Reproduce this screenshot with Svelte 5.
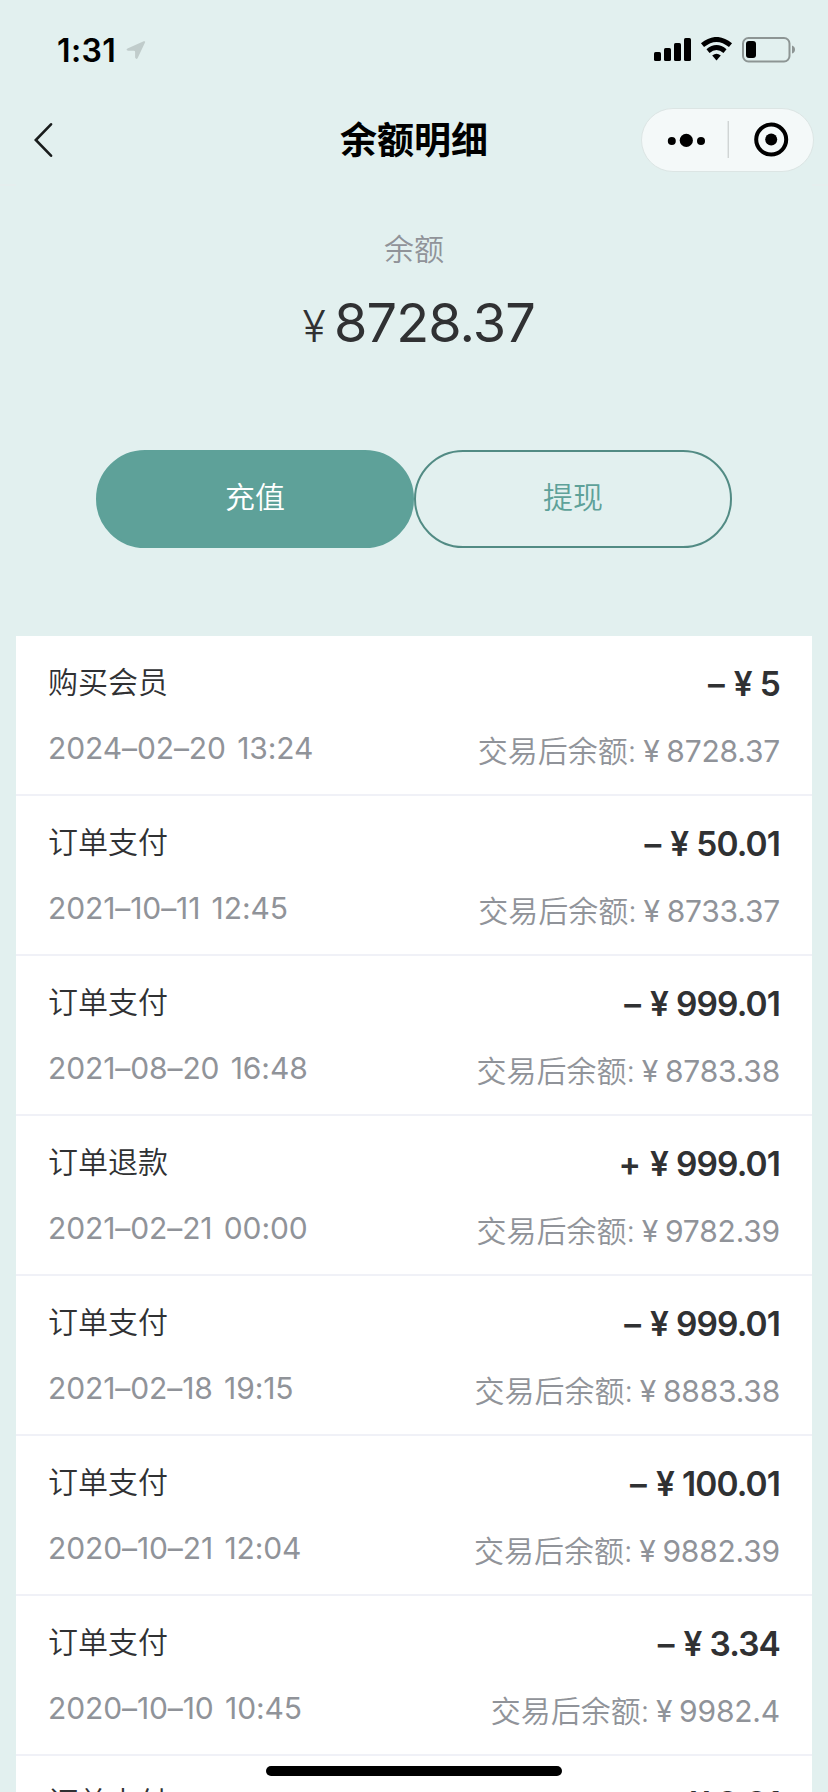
<script lang="ts">
    type Entry = {
        title: string;
        time: string;
        sign: string;
        amount: string;
        balance: string;
    };

    const balance = '8728.37';

    const entries: Entry[] = [
        { title: '购买会员', time: '2024–02–20 13:24', sign: '–', amount: '5', balance: '8728.37' },
        { title: '订单支付', time: '2021–10–11 12:45', sign: '–', amount: '50.01', balance: '8733.37' },
        { title: '订单支付', time: '2021–08–20 16:48', sign: '–', amount: '999.01', balance: '8783.38' },
        { title: '订单退款', time: '2021–02–21 00:00', sign: '+', amount: '999.01', balance: '9782.39' },
        { title: '订单支付', time: '2021–02–18 19:15', sign: '–', amount: '999.01', balance: '8883.38' },
        { title: '订单支付', time: '2020–10–21 12:04', sign: '–', amount: '100.01', balance: '9882.39' },
        { title: '订单支付', time: '2020–10–10 10:45', sign: '–', amount: '3.34', balance: '9982.4' },
        { title: '订单支付', time: '', sign: '–', amount: '0.01', balance: '' }
    ];
</script>

<div class="page">
    <header>
        <div class="status">
            <span class="clock">1:31</span>
            <svg class="location" width="20" height="20" viewBox="0 0 20 20" aria-hidden="true">
                <path d="M1.5 8.6 17.7 1.3Q19.6.7 19 2.5L11.7 18Q10.3 20.2 9.1 17.5V12Q9.1 10.8 7.8 10.8H2.2Q-.8 10.2 1.5 8.6Z" />
            </svg>
            <svg class="indicators" width="142" height="26" viewBox="0 0 142 26" aria-hidden="true">
                <rect x="0" y="15" width="7" height="9" rx="1.6" />
                <rect x="10" y="11" width="7" height="13" rx="1.6" />
                <rect x="20" y="6" width="7" height="18" rx="1.6" />
                <rect x="30" y="1" width="7" height="23" rx="1.6" />
                <g class="waves">
                    <path d="M48.5 8.2Q62.5-3.4 76.5 8.2" />
                    <path d="M54 14.1Q62.5 7.1 71 14.1" />
                </g>
                <path d="M58.2 18.6Q62.5 15 66.8 18.6L62.5 23.6Z" />
                <rect class="battery" x="89" y="1" width="46.5" height="23.5" rx="5.5" />
                <rect x="92" y="4" width="10" height="17" rx="3" />
                <path class="cap" d="M138 8.5Q141 9.5 141 12.5T138 16.5Z" />
            </svg>
        </div>
        <div class="nav">
            <svg class="back" width="20" height="36" viewBox="0 0 20 36" aria-hidden="true">
                <path d="M17 2.3 1.8 18 17 33.7" />
            </svg>
            <h1>余额明细</h1>
            <div class="capsule">
                <svg width="173" height="64" viewBox="0 0 173 64" aria-hidden="true">
                    <rect class="shell" x=".5" y=".5" width="172" height="63" rx="31.5" />
                    <circle cx="30.8" cy="33" r="4" />
                    <circle cx="45.3" cy="32.4" r="6.6" />
                    <circle cx="60" cy="33" r="4" />
                    <path class="divider" d="M87.2 13V50" />
                    <circle class="ring" cx="130.2" cy="31.6" r="15" />
                    <circle cx="130.2" cy="31.6" r="6" />
                </svg>
            </div>
        </div>
    </header>

    <main>
        <section class="summary">
            <div class="label">余额</div>
            <div class="total"><span class="yen">¥</span>{balance}</div>
            <div class="actions">
                <button class="recharge">充值</button>
                <button class="withdraw">提现</button>
            </div>
        </section>

        <ul class="entries">
            {#each entries as entry}
                <li>
                    <div class="line">
                        <span class="title">{entry.title}</span>
                        <span class="amount">
                            <span class="sign">{entry.sign}</span><span class="yen">¥</span>{entry.amount}
                        </span>
                    </div>
                    {#if entry.time}
                        <div class="line detail">
                            <span class="time">{entry.time}</span>
                            <span class="after">
                                交易后余额:<span class="figure"><span class="yen">¥</span>{entry.balance}</span>
                            </span>
                        </div>
                    {/if}
                </li>
            {/each}
        </ul>
    </main>

    <div class="home-bar"></div>
</div>

<style>
    :global(body) {
        background: #e2f0ef;
    }

    .page {
        position: relative;
        height: 1792px;
        overflow: hidden;
        background: #e2f0ef;
        color: #303133;
        font-family: Inter, 'Noto Sans CJK SC', sans-serif;
        font-size: 30px;
        font-weight: 350;
    }

    header {
        box-sizing: border-box;
        height: 186px;
        border-bottom: 2px solid #e5eeee;
    }

    .status {
        display: flex;
        height: 96px;
        padding: 0 32px 0 57px;
        box-sizing: border-box;
    }

    .clock {
        margin-top: 32px;
        width: 69px;
        color: #000;
        font-size: 32px;
        font-weight: 600;
        line-height: 38px;
        letter-spacing: 0.4px;
    }

    .location {
        margin-top: 40px;
        fill: #c0cccb;
    }

    .indicators {
        margin: 37px 0 0 auto;
    }

    .waves {
        fill: none;
        stroke: #000;
        stroke-width: 4.8;
    }

    .battery {
        fill: none;
        stroke: #8d9594;
        stroke-width: 2;
    }

    .cap {
        fill: #8d9594;
    }

    .nav {
        display: grid;
        grid-template-columns: 1fr auto 1fr;
        align-items: center;
        height: 88px;
        padding: 0 14px;
    }

    .back {
        margin-left: 20px;
        fill: none;
        stroke: #191c1c;
        stroke-width: 2.6;
        stroke-linecap: round;
    }

    h1 {
        margin: 2px 0 0;
        color: #000;
        font-size: 37px;
        font-weight: 600;
        line-height: 54px;
    }

    .capsule {
        justify-self: end;
        height: 64px;
    }

    .capsule svg {
        display: block;
    }

    .shell {
        fill: #f4f9f9;
        stroke: #dce5e4;
    }

    .divider {
        stroke: #c0c6c5;
    }

    .ring {
        fill: none;
        stroke: #000;
        stroke-width: 4;
    }

    main {
        padding: 0 16px;
    }

    /* covers the header rule between the side gutters */
    .summary {
        height: 452px;
        margin-top: -2px;
        box-sizing: border-box;
        padding-top: 43px;
        background: #e2f0ef;
        text-align: center;
    }

    .label {
        color: #909399;
        line-height: 44px;
    }

    .total {
        margin-top: 18px;
        height: 68px;
        font-size: 54px;
        font-weight: 400;
        line-height: 68px;
        letter-spacing: -0.9px;
    }

    .yen {
        display: inline-block;
        width: 30px;
        text-align: center;
    }

    .total .yen {
        width: 41px;
        font-size: 43px;
        font-weight: 350;
    }

    .actions {
        display: grid;
        grid-template-columns: 1fr 1fr;
        margin: 93px 80px 0;
    }

    button {
        height: 98px;
        padding: 0 0 8px;
        border: 2px solid #5ea199;
        border-radius: 50px;
        font: inherit;
    }

    .recharge {
        background: #5ea199;
        color: #fff;
    }

    .withdraw {
        border-color: #528b84;
        background: transparent;
        color: #5ea199;
    }

    .entries {
        margin: 0;
        padding: 0;
        list-style: none;
        background: #fff;
    }

    li {
        box-sizing: border-box;
        height: 160px;
        padding: 25px 32px 0;
        border-bottom: 2px solid #f0f1f7;
    }

    .line {
        display: flex;
        justify-content: space-between;
        height: 42px;
        line-height: 42px;
    }

    .amount {
        padding-top: 2px;
        font-size: 33.5px;
        font-weight: 600;
        letter-spacing: -0.9px;
    }

    .amount .yen {
        width: 34px;
    }

    .sign {
        margin-right: 2px;
    }

    .detail {
        margin-top: 24px;
        color: #909399;
    }

    .time {
        font-weight: 400;
        letter-spacing: -0.1px;
        word-spacing: 3px;
    }

    .after {
        padding-top: 3px;
    }

    .figure {
        font-weight: 400;
        letter-spacing: -0.2px;
    }

    .home-bar {
        position: absolute;
        bottom: 16px;
        left: 266px;
        width: 296px;
        height: 10px;
        border-radius: 5px;
        background: #000;
    }
</style>
